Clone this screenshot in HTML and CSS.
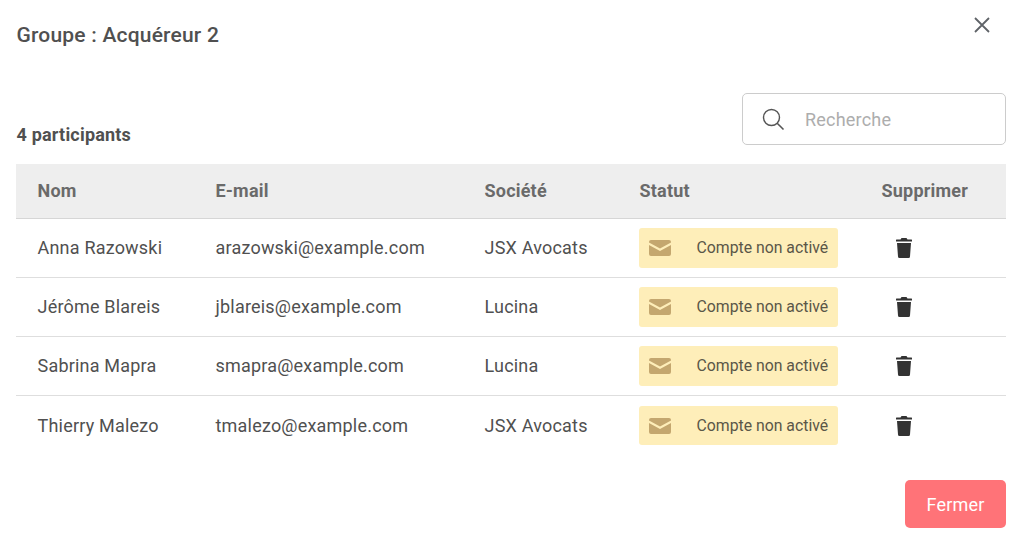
FILE: index.html
```html
<!DOCTYPE html>
<html lang="fr">
<head>
<meta charset="utf-8">
<title>Groupe : Acquéreur 2</title>
<link rel="stylesheet" href="styles.css">
</head>
<body>
<div class="modal">
  <header class="modal-head">
    <h1 class="title">Groupe : Acquéreur 2</h1>
    <button class="close" aria-label="Fermer">
      <svg width="16" height="16" viewBox="0 0 16 16"><path d="M1 1L15 15M15 1L1 15" stroke="#5f6368" stroke-width="1.8" fill="none"/></svg>
    </button>
  </header>
  <div class="toolbar">
    <div class="count">4 participants</div>
    <div class="search">
      <svg class="search-icon" width="23" height="23" viewBox="0 0 23 23"><circle cx="9.5" cy="9.5" r="8" stroke="#555" stroke-width="1.4" fill="none"/><path d="M15.2 15.2L21.5 21.5" stroke="#555" stroke-width="1.6" fill="none"/></svg>
      <span class="placeholder">Recherche</span>
    </div>
  </div>
  <div class="table">
    <div class="row head">
      <div>Nom</div><div>E-mail</div><div>Société</div><div>Statut</div><div>Supprimer</div>
    </div>
    <div class="row">
      <div>Anna Razowski</div><div>arazowski@example.com</div><div>JSX Avocats</div>
      <div><span class="badge"><svg class="mail" width="22" height="16" viewBox="0 0 22 16"><path class="mail-fill" d="M2 0H20A2 2 0 0 1 22 2V2.6L11 8.6L0 2.6V2A2 2 0 0 1 2 0ZM0 5L11 11L22 5V14A2 2 0 0 1 20 16H2A2 2 0 0 1 0 14Z"/></svg>Compte non activé</span></div>
      <div class="del"><svg width="16" height="20" viewBox="0 0 16 20"><path class="trash" d="M5.500 0H10.500L11.500 1.500H15.500A.5.500 0 0 1 16 2V3.500H0V2A.5.500 0 0 1 .5 1.500H4.500ZM1 5H15L14 18.500A1.500 1.500 0 0 1 12.500 20H3.500A1.500 1.500 0 0 1 2 18.500Z"/></svg></div>
    </div>
    <div class="row">
      <div>Jérôme Blareis</div><div>jblareis@example.com</div><div>Lucina</div>
      <div><span class="badge"><svg class="mail" width="22" height="16" viewBox="0 0 22 16"><path class="mail-fill" d="M2 0H20A2 2 0 0 1 22 2V2.6L11 8.6L0 2.6V2A2 2 0 0 1 2 0ZM0 5L11 11L22 5V14A2 2 0 0 1 20 16H2A2 2 0 0 1 0 14Z"/></svg>Compte non activé</span></div>
      <div class="del"><svg width="16" height="20" viewBox="0 0 16 20"><path class="trash" d="M5.500 0H10.500L11.500 1.500H15.500A.5.500 0 0 1 16 2V3.500H0V2A.5.500 0 0 1 .5 1.500H4.500ZM1 5H15L14 18.500A1.500 1.500 0 0 1 12.500 20H3.500A1.500 1.500 0 0 1 2 18.500Z"/></svg></div>
    </div>
    <div class="row">
      <div>Sabrina Mapra</div><div>smapra@example.com</div><div>Lucina</div>
      <div><span class="badge"><svg class="mail" width="22" height="16" viewBox="0 0 22 16"><path class="mail-fill" d="M2 0H20A2 2 0 0 1 22 2V2.6L11 8.6L0 2.6V2A2 2 0 0 1 2 0ZM0 5L11 11L22 5V14A2 2 0 0 1 20 16H2A2 2 0 0 1 0 14Z"/></svg>Compte non activé</span></div>
      <div class="del"><svg width="16" height="20" viewBox="0 0 16 20"><path class="trash" d="M5.500 0H10.500L11.500 1.500H15.500A.5.500 0 0 1 16 2V3.500H0V2A.5.500 0 0 1 .5 1.500H4.500ZM1 5H15L14 18.500A1.500 1.500 0 0 1 12.500 20H3.500A1.500 1.500 0 0 1 2 18.500Z"/></svg></div>
    </div>
    <div class="row last">
      <div>Thierry Malezo</div><div>tmalezo@example.com</div><div>JSX Avocats</div>
      <div><span class="badge"><svg class="mail" width="22" height="16" viewBox="0 0 22 16"><path class="mail-fill" d="M2 0H20A2 2 0 0 1 22 2V2.6L11 8.6L0 2.6V2A2 2 0 0 1 2 0ZM0 5L11 11L22 5V14A2 2 0 0 1 20 16H2A2 2 0 0 1 0 14Z"/></svg>Compte non activé</span></div>
      <div class="del"><svg width="16" height="20" viewBox="0 0 16 20"><path class="trash" d="M5.500 0H10.500L11.500 1.500H15.500A.5.500 0 0 1 16 2V3.500H0V2A.5.500 0 0 1 .5 1.500H4.500ZM1 5H15L14 18.500A1.500 1.500 0 0 1 12.500 20H3.500A1.500 1.500 0 0 1 2 18.500Z"/></svg></div>
    </div>
  </div>
  <footer class="foot"><button class="btn">Fermer</button></footer>
</div>
</body>
</html>
```
FILE: styles.css
```css
* { box-sizing: border-box; }
html, body { margin: 0; height: 100%; background: #fff; overflow: hidden; }
body { font-family: Roboto, "Liberation Sans", sans-serif; color: #505050; letter-spacing: .2px; }
.modal { width: 1024px; height: 539px; padding: 0 18px 0 16px; display: flex; flex-direction: column; }
.modal-head { height: 93px; display: flex; justify-content: space-between; align-items: flex-start; }
.title { margin: 22px 0 0 .5px; font-size: 21px; line-height: 26px; font-weight: 500; color: #505050; }
.close { margin: 17px 16.500px 0 0; padding: 0; width: 16px; height: 16px; border: 0; background: none; display: flex; }
.toolbar { height: 71px; display: flex; justify-content: space-between; align-items: flex-start; }
.count { margin: 31px 0 0 .5px; font-size: 18px; line-height: 21px; font-weight: 700; color: #505050; }
.search { width: 264px; height: 52px; border: 1px solid #ccc; border-radius: 5px; display: flex; align-items: center; padding-left: 19px; }
.search-icon { flex: none; }
.placeholder { margin-left: 20px; font-size: 18px; color: #adadad; }
.table { display: flex; flex-direction: column; }
.row { display: grid; grid-template-columns: 178px 269px 155px 242px 146px; align-items: center; height: 59.100px; padding-bottom: .5px; border-bottom: 1px solid #dedede; font-size: 18px; }
.row > div { padding-left: 21.500px; }
.row.head { height: 55px; padding-bottom: 1px; background: #eee; border-bottom: 1px solid #d6d6d6; font-weight: 700; color: #6a6a6a; }
.row.last { border-bottom: 0; }
.row > .status { padding-left: 21px; }
.badge { display: flex; align-items: center; width: 199px; height: 39.500px; margin-left: -.5px; background: #feeeb9; border-radius: 3px; padding-left: 10px; font-size: 15.800px; letter-spacing: 0; color: #5a5648; }
.mail { flex: none; margin-right: 25.500px; }
.mail-fill { fill: #c4a76f; }
.row > .del { display: flex; padding-left: 36px; }
.trash { fill: #333; }
.foot { flex: 1; display: flex; justify-content: flex-end; align-items: flex-start; padding-top: 25px; }
.btn { width: 101px; height: 48px; border: 0; border-radius: 5px; background: #ff7378; color: #fff; font: 400 18px Roboto, sans-serif; letter-spacing: .2px; }
```
